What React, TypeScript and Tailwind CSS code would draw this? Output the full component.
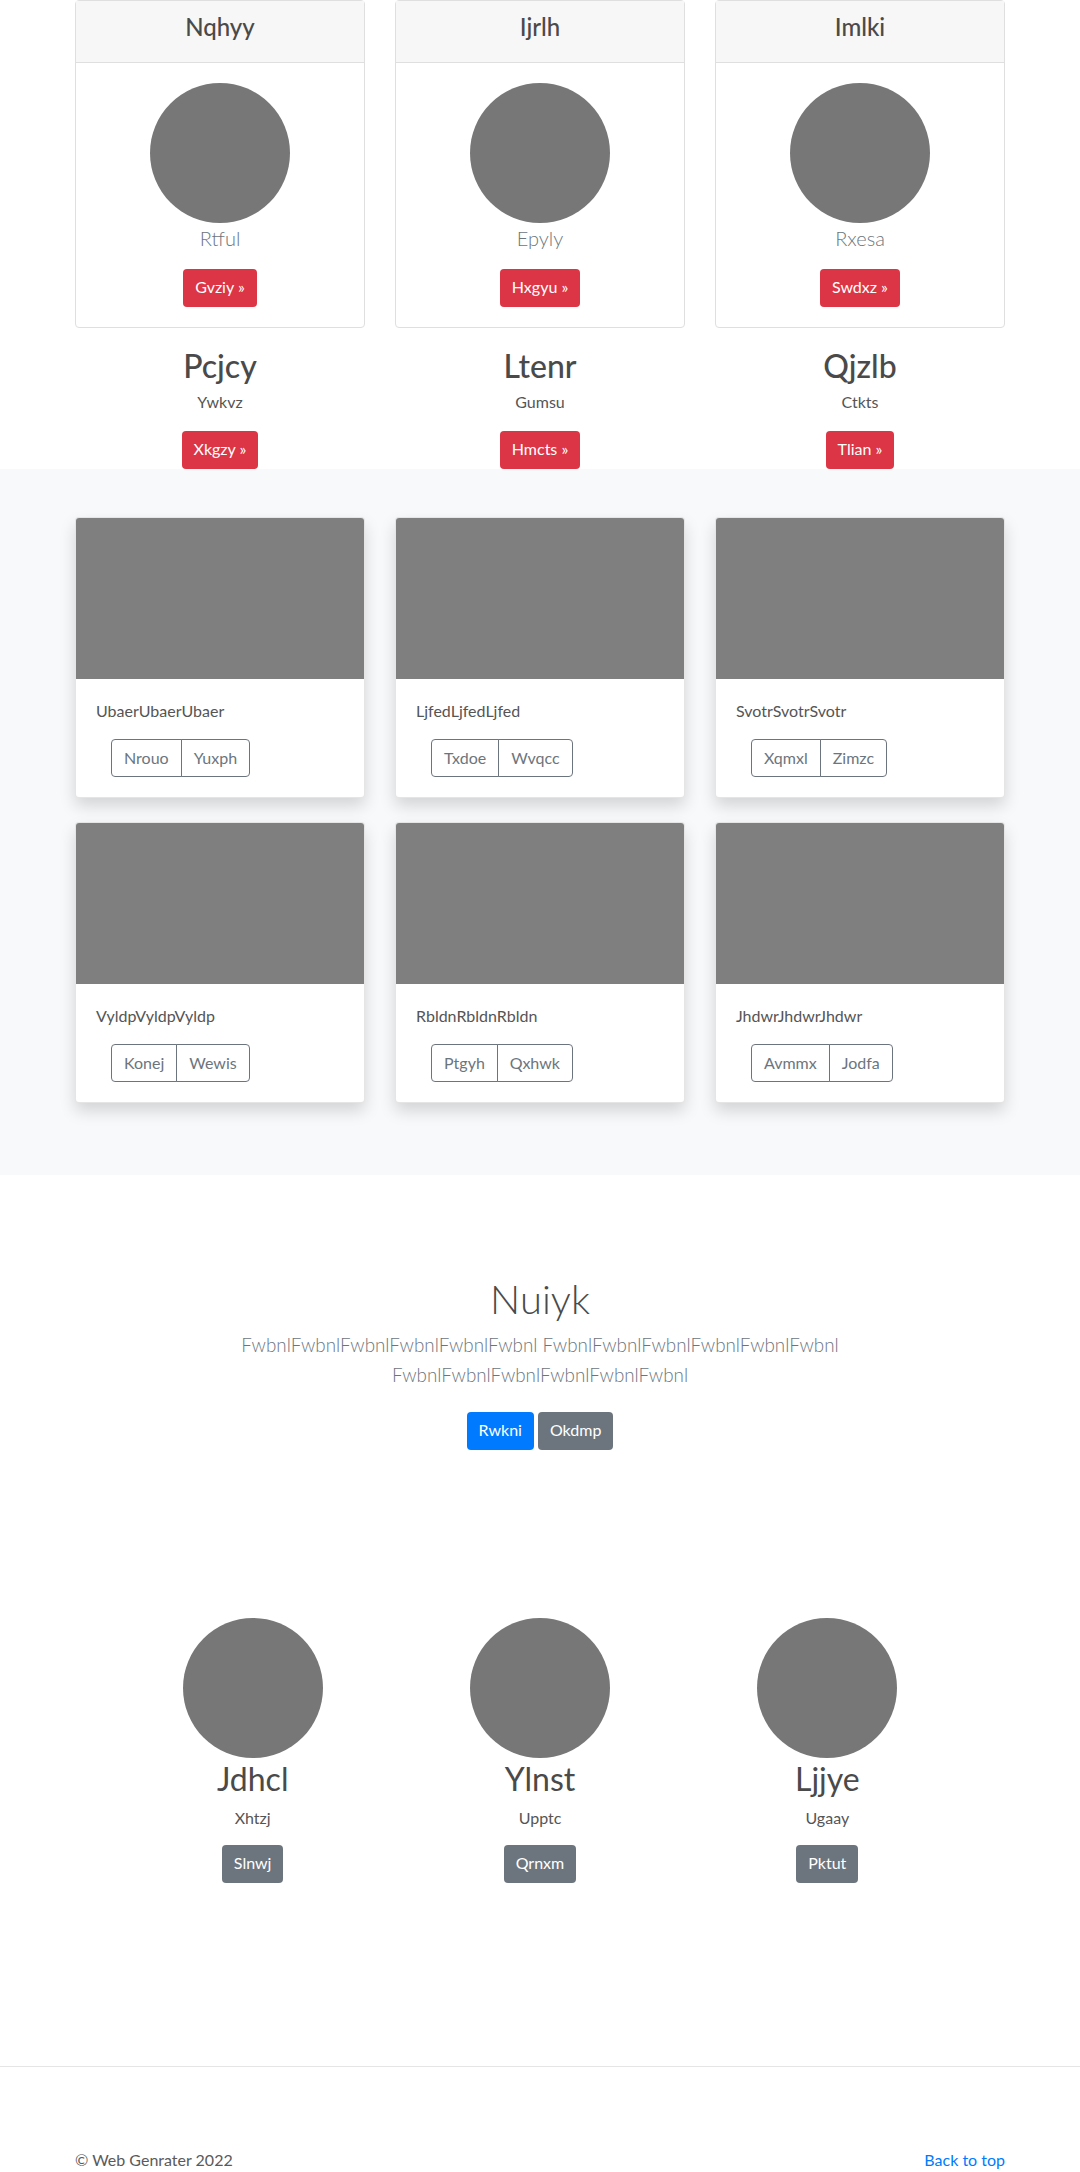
import React from "react";

const FONT = "font-['Segoe_UI','Lato','Noto_Sans',sans-serif]";

const topCols = [
  { head: "Nqhyy", lead: "Rtful", btn: "Gvziy", title: "Pcjcy", sub: "Ywkvz", btn2: "Xkgzy" },
  { head: "Ijrlh", lead: "Epyly", btn: "Hxgyu", title: "Ltenr", sub: "Gumsu", btn2: "Hmcts" },
  { head: "Imlki", lead: "Rxesa", btn: "Swdxz", title: "Qjzlb", sub: "Ctkts", btn2: "Tlian" },
];

const albumCards = [
  { text: "UbaerUbaerUbaer", a: "Nrouo", b: "Yuxph" },
  { text: "LjfedLjfedLjfed", a: "Txdoe", b: "Wvqcc" },
  { text: "SvotrSvotrSvotr", a: "Xqmxl", b: "Zimzc" },
  { text: "VyldpVyldpVyldp", a: "Konej", b: "Wewis" },
  { text: "RbldnRbldnRbldn", a: "Ptgyh", b: "Qxhwk" },
  { text: "JhdwrJhdwrJhdwr", a: "Avmmx", b: "Jodfa" },
];

const team = [
  { name: "Jdhcl", sub: "Xhtzj", btn: "Slnwj" },
  { name: "Ylnst", sub: "Upptc", btn: "Qrnxm" },
  { name: "Ljjye", sub: "Ugaay", btn: "Pktut" },
];

function RedBtn({ label }: { label: string }) {
  return (
    <a className="inline-block h-[38px] rounded-[4px] bg-[#dc3545] px-3 py-[6px] text-[16px] leading-[24px] text-white">
      {label} &raquo;
    </a>
  );
}

export default function App() {
  return (
    <div className={`${FONT} w-full bg-white text-[#555555]`}>
      {/* Top section */}
      <section className="mx-auto w-[960px] px-[15px]">
        <div className="grid grid-cols-3 gap-x-[30px]">
          {topCols.map((c) => (
            <div key={c.head} className="flex flex-col items-center text-center">
              <div className="w-full rounded-[4px] border border-[#dfdfdf] bg-white">
                <div className="border-b border-[#dfdfdf] bg-[#f7f7f7] pt-3 pb-5">
                  <h4 className="text-[24px] font-medium leading-[1.2] text-[#4a4a4a]">{c.head}</h4>
                </div>
                <div className="flex flex-col items-center px-5 pt-5 pb-5">
                  <div className="h-[140px] w-[140px] rounded-full bg-[#777777]" />
                  <p className="text-[20px] font-light leading-[30px] text-[#6c757d]">{c.lead}</p>
                  <div className="mt-[16px]">
                    <RedBtn label={c.btn} />
                  </div>
                </div>
              </div>
              <h2 className="mt-[19px] text-[32px] font-medium leading-[1.2] text-[#4a4a4a]">{c.title}</h2>
              <p className="mt-[5px] text-[16px] leading-6 text-[#555555]">{c.sub}</p>
              <div className="mt-[17px]">
                <RedBtn label={c.btn2} />
              </div>
            </div>
          ))}
        </div>
      </section>

      {/* Album section */}
      <section className="bg-[#f8f9fa] py-[48px]">
        <div className="mx-auto w-[960px] px-[15px]">
          <div className="grid grid-cols-3 gap-x-[30px] gap-y-[24px] pb-[24px]">
            {albumCards.map((c) => (
              <div
                key={c.text}
                className="overflow-hidden rounded-[4px] border border-[rgba(0,0,0,0.1)] bg-white shadow-[0_8px_16px_rgba(0,0,0,0.15)]"
              >
                <div className="h-[161px] w-full bg-[#7f7f7f]" />
                <div className="p-5">
                  <p className="mb-4 text-[16px] leading-6 text-[#555555]">{c.text}</p>
                  <div className="ml-[15px] inline-flex h-[38px] text-[16px] leading-[24px] text-[#6c757d]">
                    <span className="rounded-l-[4px] border border-[#6c757d] px-3 py-[6px] leading-[24px]">{c.a}</span>
                    <span className="-ml-px rounded-r-[4px] border border-[#6c757d] px-3 py-[6px] leading-[24px]">{c.b}</span>
                  </div>
                </div>
              </div>
            ))}
          </div>
        </div>
      </section>

      {/* Jumbotron */}
      <section className="pt-[100px] text-center">
        <h1 className="text-[40px] font-light leading-[48px] text-[#4a4a4a]">Nuiyk</h1>
        <p className="mx-auto mt-[7px] w-[680px] text-[18.8px] font-light leading-[30px] text-[#6c757d]">
          FwbnlFwbnlFwbnlFwbnlFwbnlFwbnl FwbnlFwbnlFwbnlFwbnlFwbnlFwbnl FwbnlFwbnlFwbnlFwbnlFwbnlFwbnl
        </p>
        <div className="mt-[14px] flex justify-center gap-[4px] py-2">
          <a className="inline-block h-[38px] rounded-[4px] bg-[#007bff] px-3 py-[6px] text-[16px] leading-[24px] text-white">Rwkni</a>
          <a className="inline-block h-[38px] rounded-[4px] bg-[#6c757d] px-3 py-[6px] text-[16px] leading-[24px] text-white">Okdmp</a>
        </div>
      </section>

      {/* Team */}
      <section className="pt-[160px]">
        <div className="mx-auto grid w-[862px] grid-cols-3">
          {team.map((t) => (
            <div key={t.name} className="flex flex-col items-center text-center">
              <div className="h-[140px] w-[140px] rounded-full bg-[#777777]" />
              <h2 className="mt-[2px] text-[32px] font-normal leading-[1.2] text-[#4a4a4a]">{t.name}</h2>
              <p className="mt-[7px] text-[16px] leading-6 text-[#555555]">{t.sub}</p>
              <a className="mt-[15px] inline-block h-[38px] rounded-[4px] bg-[#6c757d] px-3 py-[6px] text-[16px] leading-[24px] text-white">
                {t.btn}
              </a>
            </div>
          ))}
        </div>
      </section>

      {/* Footer */}
      <footer className="mt-[183px] border-t border-[#e5e5e5] pt-[81px] pb-[40px]">
        <div className="mx-auto flex w-[960px] justify-between px-[15px] text-[16px] leading-6">
          <p className="text-[#5a5a5a]">&copy; Web Genrater 2022</p>
          <a className="text-[#007bff]">Back to top</a>
        </div>
      </footer>
    </div>
  );
}
